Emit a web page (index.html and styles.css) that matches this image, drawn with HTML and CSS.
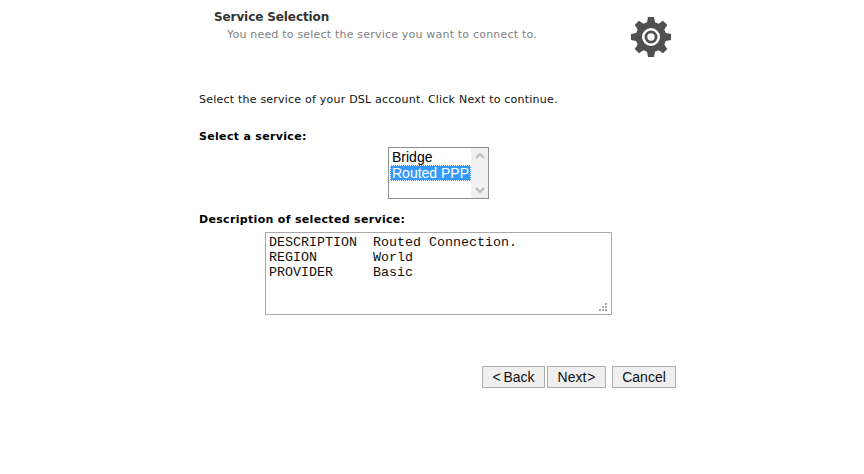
FILE: index.html
```html
<!DOCTYPE html>
<html lang="en">
<head>
<meta charset="utf-8">
<title>Service Selection</title>
<link rel="stylesheet" href="styles.css">
</head>
<body>
<main class="wizard">
  <header class="head">
    <div class="head-text">
      <h1 class="title">Service Selection</h1>
      <p class="subtitle">You need to select the service you want to connect to.</p>
    </div>
    <svg class="gear" viewBox="0 0 40 40" width="40" height="40" aria-hidden="true">
      <path fill="#505050" fill-rule="evenodd" d="M17 0h6l1 5.200 3.600 1.500L32 3.700 36.300 8l-3 4.400L34.800 16 40 17v6l-5.200 1-1.500 3.600 3 4.400L32 36.300l-4.400-3-3.600 1.500L23 40h-6l-1-5.200-3.600-1.500-4.400 3L3.700 32l3-4.400L5.200 24 0 23v-6l5.200-1 1.500-3.600-3-4.400L8 3.700l4.400 3L16 5.200zM20 11a9 9 0 1 0 0 18 9 9 0 0 0 0-18z"/>
      <path fill="#505050" fill-rule="evenodd" d="M20 13.500a6.500 6.500 0 1 0 0 13 6.500 6.500 0 0 0 0-13zM20 16.300a3.700 3.700 0 1 1 0 7.400 3.700 3.700 0 0 1 0-7.400z"/>
    </svg>
  </header>

  <p class="intro">Select the service of your DSL account. Click Next to continue.</p>

  <h2 class="label label-service">Select a service:</h2>
  <div class="list-row">
    <div class="listbox">
      <ul class="options">
        <li class="option">Bridge</li>
        <li class="option selected">Routed PPP</li>
      </ul>
      <div class="scrollbar">
        <svg class="arrow" viewBox="0 0 10 6" width="10" height="6" aria-hidden="true"><path d="M1 5l4-4 4 4" fill="none" stroke="#bcbcbc" stroke-width="2"/></svg>
        <svg class="arrow" viewBox="0 0 10 6" width="10" height="6" aria-hidden="true"><path d="M1 1l4 4 4-4" fill="none" stroke="#bcbcbc" stroke-width="2"/></svg>
      </div>
    </div>
  </div>

  <h2 class="label label-desc">Description of selected service:</h2>
  <div class="desc-row">
    <div class="desc-box">
      <textarea class="desc" readonly>DESCRIPTION  Routed Connection.
REGION       World
PROVIDER     Basic</textarea>
      <svg class="grip" viewBox="0 0 9 9" width="9" height="9" aria-hidden="true">
        <path fill="#a8a8a8" d="M7 1h2v2H7zM4 4h2v2H4zM7 4h2v2H7zM1 7h2v2H1zM4 7h2v2H4zM7 7h2v2H7z"/>
      </svg>
    </div>
  </div>

  <div class="actions">
    <button class="btn btn-back" type="button">&lt; Back</button>
    <button class="btn btn-next" type="button">Next &gt;</button>
    <button class="btn btn-cancel" type="button">Cancel</button>
  </div>
</main>
</body>
</html>
```
FILE: styles.css
```css
* { box-sizing: border-box; }
html, body { margin: 0; padding: 0; background: #fff; }
body { font-family: "DejaVu Sans", Verdana, sans-serif; font-size: 11px; color: #000; }
.wizard { width: 478px; margin-left: 199px; padding-top: 10px; }
.head { display: flex; justify-content: space-between; align-items: flex-start; height: 81px; padding: 0 6px 0 15px; }
.title { margin: 0; font-size: 12px; line-height: 15px; font-weight: bold; color: #333; letter-spacing: -0.1px; }
.subtitle { margin: 2px 0 0 13px; font-size: 11px; line-height: 16px; color: #808080; letter-spacing: 0.2px; }
.gear { margin-top: 7px; }
.intro { margin: 0; line-height: 18px; color: #111; letter-spacing: 0.22px; }
.label { margin: 0; font-size: 11px; line-height: 16px; font-weight: bold; letter-spacing: 0.32px; }
.label-service { margin-top: 20px; }
.list-row { display: flex; padding-left: 189px; margin-top: 2px; }
.listbox { display: flex; width: 101px; height: 52px; border: 1px solid #8f8f8f; background: #fff; }
.options { flex: 1; margin: 0; padding: 1px 0 0 1px; list-style: none; font-family: "Liberation Sans", Arial, sans-serif; font-size: 14px; }
.option { height: 16px; line-height: 16px; padding-left: 2px; }
.selected { background: #3399ff; color: #fff; outline: 1px dotted #fff; outline-offset: -1px; }
.scrollbar { width: 17px; background: #f0f0f0; display: flex; flex-direction: column; justify-content: space-between; align-items: center; padding: 5px 0; }
.label-desc { margin-top: 13px; }
.desc-row { display: flex; padding-left: 66px; margin-top: 4px; }
.desc-box { position: relative; width: 347px; height: 83px; }
.desc { display: block; width: 100%; height: 100%; margin: 0; padding: 2px 3px; border: 1px solid #a9a9a9; border-radius: 0; outline: 0; overflow: hidden; resize: none; font-family: "Liberation Mono", "Courier New", monospace; font-size: 13.33px; line-height: 15px; color: #111; white-space: pre; }
.grip { position: absolute; right: 5px; bottom: 4px; }
.actions { display: flex; justify-content: flex-end; align-items: center; margin-top: 51px; padding-right: 1px; }
.btn { height: 22px; padding: 0; border: 1px solid #adadad; border-radius: 0; background: #efefef; font-family: "Liberation Sans", Arial, sans-serif; font-size: 14px; color: #111; text-align: center; }
.btn-back { width: 63px; margin-right: 2px; word-spacing: -1px; }
.btn-next { width: 59px; margin-right: 6px; word-spacing: -3px; }
.btn-cancel { width: 64px; }
```
